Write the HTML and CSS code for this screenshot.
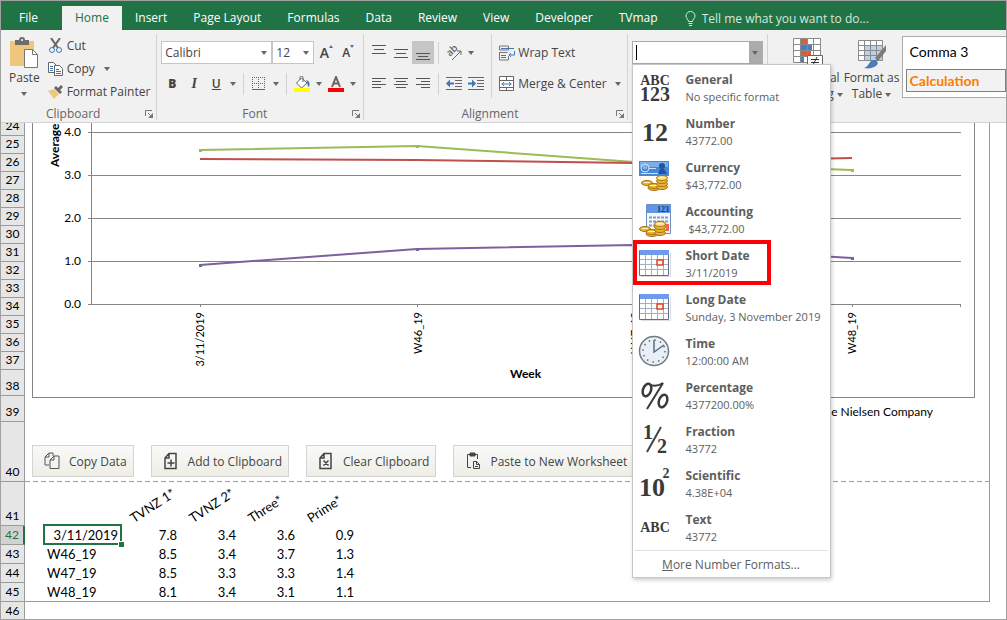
FILE: index.html
```html
<!DOCTYPE html>
<html lang="en">
<head>
    <meta charset="UTF-8">
    <meta name="viewport" content="width=device-width, initial-scale=1.0">
    <title>Workbook</title>
    <link rel="stylesheet" href="styles.css">
</head>
<body>

    <!-- shared icons -->
    <svg class="defs" width="0" height="0" aria-hidden="true">
        <symbol id="caret" viewBox="0 0 6 4"><path d="M0 0h6L3 4z" fill="#666"/></symbol>
        <symbol id="launch" viewBox="0 0 8 8"><path d="M.5 6V.5H7M3 3l3 3" fill="none" stroke="#777"/><path d="M8 3v5H3z" fill="#777"/></symbol>
        <symbol id="calendar" viewBox="0 0 32 32">
            <path d="M2 28.500h29.500V5" fill="none" stroke="#ddd"/>
            <path d="M1 3h29v24H1z" fill="#fff"/>
            <path d="M1 11.500h29M1 16.500h29M1 21.500h29M6.500 7v20M12.500 7v20M18.500 7v20M24.500 7v20" stroke="#9fb0cc" fill="none"/>
            <path d="M.5 2.500h29v25H.5z" fill="none" stroke="#5c6f92"/>
            <path d="M1 2h29v5H1z" fill="#6f9bea"/>
            <path d="M18 12h6v5h-6z" fill="#fff" stroke="#e2401c" stroke-width="1.500"/>
        </symbol>
        <symbol id="coins" viewBox="0 0 32 32">
            <g fill="#e8b530" stroke="#a87412">
                <ellipse cx="8" cy="23" rx="5.500" ry="2.500"/>
                <ellipse cx="15" cy="28" rx="6" ry="2.500"/>
                <ellipse cx="15" cy="26" rx="6" ry="2.500"/>
                <ellipse cx="23" cy="27" rx="5.500" ry="2.500"/>
                <ellipse cx="23" cy="24" rx="5.500" ry="2.500"/>
                <ellipse cx="23" cy="21" rx="5.500" ry="2.500"/>
                <ellipse cx="23" cy="18" rx="5.500" ry="2.500" fill="#fbe08a"/>
            </g>
            <path d="M5 22.500h6M11 25.500h7M20 17.500h6" stroke="#fff3b8"/>
        </symbol>
    </svg>

    <nav class="tabs">
        <a class="tab file" href="#">File</a>
        <a class="tab active" href="#">Home</a>
        <a class="tab" href="#">Insert</a>
        <a class="tab" href="#">Page Layout</a>
        <a class="tab" href="#">Formulas</a>
        <a class="tab" href="#">Data</a>
        <a class="tab" href="#">Review</a>
        <a class="tab" href="#">View</a>
        <a class="tab" href="#">Developer</a>
        <a class="tab" href="#">TVmap</a>
        <label class="tell">
            <svg width="11" height="15" viewBox="0 0 11 15" fill="none" stroke="#d5e8dc"><path d="M3.500 10.500C3.500 8.500 1 7.500 1 5a4.500 4.500 0 0 1 9 0c0 2.500-2.500 3.500-2.500 5.500zM3.500 12.500h4M4 14.500h3"/></svg>
            <input type="text" placeholder="Tell me what you want to do..." aria-label="Tell me what you want to do">
        </label>
    </nav>

    <header class="ribbon">

        <section class="group">
            <div class="clipboard">
                <button class="big paste">
                    <svg width="30" height="32" viewBox="0 0 30 32">
                        <path d="M1 4h24v25H1z" fill="#eec67c"/>
                        <path d="M6 8V3h4a3 3 0 0 1 6 0h4v5z" fill="#6d6d6d"/><circle cx="13" cy="3" r="1" fill="#fff"/>
                        <path d="M15.500 12.500h8l5 5v13h-13z" fill="#fff" stroke="#777"/>
                        <path d="M23.500 12.500v5h5" fill="none" stroke="#777"/>
                    </svg>
                    <span>Paste</span>
                    <svg class="caret"><use href="#caret"/></svg>
                </button>
                <div class="stack">
                    <button class="small">
                        <svg width="16" height="16" viewBox="0 0 16 16"><path d="M3 0l7 10M12 0L5 10" stroke="#666" stroke-width="2"/><circle cx="4" cy="12" r="2.500" fill="#f1f1f1" stroke="#3f77b5"/><circle cx="11" cy="12" r="2.500" fill="#f1f1f1" stroke="#3f77b5"/></svg>
                        Cut
                    </button>
                    <button class="small">
                        <svg width="16" height="16" viewBox="0 0 16 16"><g fill="#fff" stroke="#666"><path d="M.5 1.500h5l3 3v7h-8z"/><path d="M6.500 4.500h5l3 3v7h-8z"/></g><path d="M2 5.500h3M2 7.500h3M2 9.500h3M8 8.500h3M8 10.500h5M8 12.500h5" stroke="#3f77b5"/></svg>
                        Copy <svg class="caret gap"><use href="#caret"/></svg>
                    </button>
                    <button class="small">
                        <svg width="16" height="16" viewBox="0 0 16 16"><path d="M0 7l6-2 5 5-5 5z" fill="#eec67c"/><path d="M6 4l6 6 2-2-2-2 3-3-2-2-3 3-2-2z" fill="#666"/></svg>
                        Format Painter
                    </button>
                </div>
            </div>
            <div class="label"><span>Clipboard</span><svg class="launch"><use href="#launch"/></svg></div>
        </section>

        <section class="group">
            <div class="rows">
                <div class="row">
                    <span class="pick font"><select aria-label="Font"><option>Calibri</option></select><svg class="caret"><use href="#caret"/></svg></span>
                    <span class="pick size"><select aria-label="Font size"><option>12</option></select><svg class="caret"><use href="#caret"/></svg></span>
                    <button class="icon grow" aria-label="Increase font size"><b>A</b><svg width="4" height="3" viewBox="0 0 4 3"><path d="M0 3h4L2 0z" fill="#3f77b5"/></svg></button>
                    <button class="icon grow shrink" aria-label="Decrease font size"><b>A</b><svg width="4" height="3" viewBox="0 0 4 3"><path d="M0 0h4L2 3z" fill="#3f77b5"/></svg></button>
                </div>
                <div class="row">
                    <button class="icon letter"><b>B</b></button>
                    <button class="icon letter"><i>I</i></button>
                    <button class="icon letter"><u>U</u></button>
                    <button class="drop" aria-label="Underline options"><svg class="caret"><use href="#caret"/></svg></button>
                    <span class="line"></span>
                    <button class="icon" aria-label="Borders"><svg width="14" height="14" viewBox="0 0 14 14" stroke="#666"><path d="M0 .5h13M0 6.500h13M.5 0v12M6.500 0v12M12.500 0v12" stroke-dasharray="1 1"/><path d="M0 12.500h13"/></svg></button>
                    <button class="drop" aria-label="Border options"><svg class="caret"><use href="#caret"/></svg></button>
                    <span class="line"></span>
                    <button class="icon" aria-label="Fill colour"><svg width="16" height="16" viewBox="0 0 16 16"><path d="M2.500 7l5-5 5.500 5-5.500 5z" fill="#fff" stroke="#666"/><path d="M6 4V1.500a1.500 1.500 0 0 1 3 0V6" fill="none" stroke="#666"/><path d="M12 4c4 1 4 4 3 7-2-1-1-4-3-7z" fill="#3f77b5"/><path d="M0 12h16v4H0z" fill="#ff0"/></svg></button>
                    <button class="drop" aria-label="Fill options"><svg class="caret"><use href="#caret"/></svg></button>
                    <button class="icon" aria-label="Font colour"><svg width="16" height="16" viewBox="0 0 16 16"><path d="M4 11l4-10 4 10M5 7.500h6" fill="none" stroke="#666" stroke-width="2"/><path d="M0 12h16v4H0z" fill="#f00"/></svg></button>
                    <button class="drop" aria-label="Font colour options"><svg class="caret"><use href="#caret"/></svg></button>
                </div>
            </div>
            <div class="label"><span>Font</span><svg class="launch"><use href="#launch"/></svg></div>
        </section>

        <section class="group">
            <div class="rows">
                <div class="row">
                    <button class="icon" aria-label="Top align"><svg width="14" height="16" viewBox="0 0 14 16" stroke="#555"><path d="M0 .5h14M2 4.500h10M0 8.500h14"/></svg></button>
                    <button class="icon" aria-label="Middle align"><svg width="14" height="16" viewBox="0 0 14 16" stroke="#555"><path d="M0 4.500h14M2 8.500h10M0 12.500h14"/></svg></button>
                    <button class="icon on" aria-label="Bottom align"><svg width="14" height="16" viewBox="0 0 14 16" stroke="#555"><path d="M0 8.500h14M2 11.500h10M0 14.500h14"/></svg></button>
                    <span class="line"></span>
                    <button class="icon" aria-label="Orientation"><svg class="turn" width="16" height="16" viewBox="0 0 16 16"><text transform="translate(4 12) rotate(-45)" class="ab">ab</text><path d="M6 15L15 6M11 6h4v4" fill="none" stroke="#666"/></svg></button>
                    <button class="drop" aria-label="Orientation options"><svg class="caret"><use href="#caret"/></svg></button>
                </div>
                <div class="row">
                    <button class="icon" aria-label="Align left"><svg width="14" height="14" viewBox="0 0 14 14" stroke="#555"><path d="M0 1.500h14M0 4.500h9M0 7.500h14M0 10.500h9"/></svg></button>
                    <button class="icon" aria-label="Center"><svg width="14" height="14" viewBox="0 0 14 14" stroke="#555"><path d="M0 1.500h14M2 4.500h10M0 7.500h14M2 10.500h10"/></svg></button>
                    <button class="icon" aria-label="Align right"><svg width="14" height="14" viewBox="0 0 14 14" stroke="#555"><path d="M0 1.500h14M5 4.500h9M0 7.500h14M5 10.500h9"/></svg></button>
                    <span class="line"></span>
                    <button class="icon" aria-label="Decrease indent"><svg width="16" height="14" viewBox="0 0 16 14"><path d="M0 .5h16M9 3.500h7M9 6.500h7M9 9.500h7M0 12.500h16" stroke="#666"/><path d="M0 6.500l4-4v3h4v2H4v3z" fill="#3f77b5"/></svg></button>
                    <button class="icon" aria-label="Increase indent"><svg width="16" height="14" viewBox="0 0 16 14"><path d="M0 .5h16M9 3.500h7M9 6.500h7M9 9.500h7M0 12.500h16" stroke="#666"/><path d="M8 6.500l-4-4v3H0v2h4v3z" fill="#3f77b5"/></svg></button>
                </div>
            </div>
            <div class="rows wraps">
                <button class="small">
                    <svg width="16" height="16" viewBox="0 0 16 16" fill="none"><path d="M.5 1v4h9V1zM.5 7.500h8M.5 7v8h9v-4" stroke="#777"/><path d="M2 3.500h13M2 10.500h5M2 12.500h5" stroke="#3f77b5"/><path d="M15.500 6v4H10M12 8l-2 2 2 2" stroke="#3f77b5"/></svg>
                    Wrap Text
                </button>
                <button class="small">
                    <svg width="16" height="16" viewBox="0 0 16 16" fill="none"><path d="M.5.500h14v14H.5z" fill="#fff"/><path d="M.5.500h14v14H.5zM.5 4.500h14M.5 11.500h14M7.500 0v4M7.500 12v3" stroke="#666"/><path d="M2.500 8h10M5 6L3 8l2 2M10 6l2 2-2 2" stroke="#3f77b5"/></svg>
                    Merge &amp; Center <svg class="caret"><use href="#caret"/></svg>
                </button>
            </div>
            <div class="label"><span>Alignment</span><svg class="launch"><use href="#launch"/></svg></div>
        </section>

        <section class="group number">
            <div class="combo">
                <input type="text" aria-label="Number format" autofocus>
                <button aria-label="Open number formats"><svg class="caret"><use href="#caret"/></svg></button>

                <div class="menu">
                    <button class="format">
                        <svg class="glyph" viewBox="0 0 32 32"><text x="16" y="13" class="g14">ABC</text><text x="16" y="29" class="g20">123</text></svg>
                        <span><b>General</b><br>No specific format</span>
                    </button>
                    <button class="format">
                        <svg class="glyph" viewBox="0 0 32 32"><text x="16" y="25" class="g26">12</text></svg>
                        <span><b>Number</b><br>43772.00</span>
                    </button>
                    <button class="format">
                        <svg class="glyph" viewBox="0 0 32 32"><path d="M0 1h30v15H0z" fill="#4787d6"/><path d="M1 2h28v5H1z" fill="#78aeea"/><circle cx="6" cy="8" r="4" fill="none" stroke="#cfe4fb"/><path d="M4 8h4M10 8.500h7M2 13.500h22" stroke="#cfe4fb"/><circle cx="23" cy="6" r="3" fill="#1e55a4"/><path d="M19 14l2-5h4l3 5z" fill="#1e55a4"/><use href="#coins"/></svg>
                        <span><b>Currency</b><br>$43,772.00</span>
                    </button>
                    <button class="format">
                        <svg class="glyph" viewBox="0 0 32 32"><path d="M7.500.500h24v29h-24z" fill="#f3f7fd" stroke="#6f8fc4"/><path d="M8 1h23v8H8z" fill="#5f96e8"/><text x="24" y="8" class="lcd">123</text><path d="M10 13.500h20M10 17.500h20M10 21.500h20" stroke="#8b9bbb" stroke-width="2" stroke-dasharray="3 1"/><path d="M27 20h3v7h-3z" fill="#e66a4c"/><use href="#coins" x="-2" y="2"/></svg>
                        <span><b>Accounting</b><br>&nbsp;$43,772.00</span>
                    </button>
                    <button class="format marked">
                        <svg class="glyph"><use href="#calendar"/></svg>
                        <span><b>Short Date</b><br>3/11/2019</span>
                    </button>
                    <button class="format">
                        <svg class="glyph"><use href="#calendar"/></svg>
                        <span><b>Long Date</b><br>Sunday, 3 November 2019</span>
                    </button>
                    <button class="format">
                        <svg class="glyph" viewBox="0 0 32 32"><circle cx="15" cy="15" r="14.500" fill="#e9eff5" stroke="#6d7a88" stroke-width="1.500"/><circle cx="15" cy="15" r="11" fill="none" stroke="#5d6875" stroke-width="1.500" stroke-dasharray="1.500 4.260"/><path d="M15 4v12l10-7" fill="none" stroke="#5d7186" stroke-width="1.500"/></svg>
                        <span><b>Time</b><br>12:00:00 AM</span>
                    </button>
                    <button class="format">
                        <svg class="glyph" viewBox="0 0 32 32"><g fill="none" stroke="#3a3a3a"><ellipse cx="8" cy="10" rx="4" ry="6.500" stroke-width="2.500" transform="rotate(20 8 10)"/><ellipse cx="24" cy="21" rx="4" ry="6.500" stroke-width="2.500" transform="rotate(20 24 21)"/><path d="M10 4q6 4 14-1L8 29" stroke-width="2"/></g></svg>
                        <span><b>Percentage</b><br>4377200.00%</span>
                    </button>
                    <button class="format">
                        <svg class="glyph" viewBox="0 0 32 32"><text x="9" y="15" class="g20">1</text><text x="23" y="29" class="g20">2</text><path d="M22 3L8 28" stroke="#444" stroke-width="2"/></svg>
                        <span><b>Fraction</b><br>43772</span>
                    </button>
                    <button class="format">
                        <svg class="glyph" viewBox="0 0 32 32"><text x="13" y="28" class="g26">10</text><text x="27" y="10" class="g14">2</text></svg>
                        <span><b>Scientific</b><br>4.38E+04</span>
                    </button>
                    <button class="format">
                        <svg class="glyph" viewBox="0 0 32 32"><text x="16" y="20" class="g14">ABC</text></svg>
                        <span><b>Text</b><br>43772</span>
                    </button>
                    <button class="more"><u>M</u>ore Number Formats...</button>
                </div>
            </div>
        </section>

        <section class="styles">
            <button class="big">
                <svg width="32" height="32" viewBox="0 0 32 32"><path d="M1 1h27v24H1z" fill="#fff"/><path d="M8 0h7v6H8zM8 13h11v6H8z" fill="#d65f3c"/><path d="M8 6h12v7H8zM8 19h4v6H8z" fill="#4a7ebb"/><path d="M1.500.500h27v24h-27zM1 6.500h27M1 12.500h27M1 18.500h27M8.500 1v24M15.500 1v24M21.500 1v24" fill="none" stroke="#8a8a8a"/><path d="M15.500 17.500h15v12h-15z" fill="#fff" stroke="#666"/><path d="M19 21.500h8M19 24.500h8M25 19l-4 8" stroke="#333"/></svg>
                <span>Conditional<br>Formatting <svg class="caret"><use href="#caret"/></svg></span>
            </button>
            <button class="big">
                <svg width="32" height="32" viewBox="0 0 32 32"><path d="M2 2h24v20H2z" fill="#fff"/><path d="M8 8h18v14H8z" fill="#bcd0e8"/><path d="M2.500 2.500h24v20h-24zM2 7.500h24M2 12.500h24M2 17.500h24M8.500 2v20M14.500 2v20M20.500 2v20" fill="none" stroke="#8a8a8a"/><path d="M19 20L30 7v6l-8 10z" fill="#7c7c7c"/><path d="M8 30c5-1 5-8 10-8 3 0 5 3 3 5-3 3-8 4-13 3z" fill="#4a7ebb"/></svg>
                <span>Format as<br>Table <svg class="caret"><use href="#caret"/></svg></span>
            </button>
            <div class="gallery">
                <button class="comma">Comma 3</button>
                <button class="calculation">Calculation</button>
            </div>
        </section>
    </header>

    <main class="sheet">
        <ol class="headings">
            <li class="cut">24</li>
            <li>25</li>
            <li>26</li>
            <li>27</li>
            <li>28</li>
            <li>29</li>
            <li>30</li>
            <li>31</li>
            <li>32</li>
            <li>33</li>
            <li>34</li>
            <li>35</li>
            <li>36</li>
            <li>37</li>
            <li class="h26">38</li>
            <li class="h26">39</li>
            <li class="h60">40</li>
            <li class="h44">41</li>
            <li class="h19 current">42</li>
            <li class="h19">43</li>
            <li class="h19">44</li>
            <li class="h19">45</li>
            <li class="h19">46</li>
        </ol>

        <div class="page">
            <svg class="chart" viewBox="0 0 941 274" role="img" aria-label="Average by week">
                <path class="grid" d="M55 9.500h873M55 52.500h873M55 95.500h873M55 138.500h873M55 181.500h873M58.500 0v182M167.500 181v3M384.500 181v3M601.500 181v3M819.500 181v3M927.500 181v3"/>
                <polyline class="series green" points="167,27 384,23 601,39 819,47"/>
                <polyline class="series red" points="167,36 384,37 601,40 819,35"/>
                <polyline class="series purple" points="167,142 384,126 601,122 819,135"/>
                <path class="green" d="M166 26h3v3h-3zM383 22h3v3h-3zM818 46h3v3h-3z"/>
                <path class="purple" d="M166 141h3v3h-3zM383 125h3v3h-3zM818 134h3v3h-3z"/>
                <g class="values">
                    <text x="48" y="13">4.0</text>
                    <text x="48" y="56">3.0</text>
                    <text x="48" y="99">2.0</text>
                    <text x="48" y="142">1.0</text>
                    <text x="48" y="185">0.0</text>
                </g>
                <g class="weeks">
                    <text transform="translate(171 189) rotate(-90)">3/11/2019</text>
                    <text transform="translate(389 189) rotate(-90)">W46_19</text>
                    <text transform="translate(606 189) rotate(-90)">W47_19</text>
                    <text transform="translate(823 189) rotate(-90)">W48_19</text>
                </g>
                <text class="title" transform="translate(26 44) rotate(-90)">Average</text>
                <text class="title" x="477" y="255">Week</text>
            </svg>

            <p class="source">The Nielsen Company</p>

            <div class="actions">
                <button>
                    <svg width="16" height="18" viewBox="0 0 16 18" fill="none" stroke="#555"><path d="M5 13H1V5l4-4h4v3M1 5h4V1M6 16.500V8l4-4h5v12.500zM6 8h4V4"/></svg>
                    Copy Data
                </button>
                <button>
                    <svg width="16" height="18" viewBox="0 0 16 18" fill="none" stroke="#444" stroke-width="1.500"><path d="M6 1.500h7v15H2V6zM2 6h4V1.500M4.500 11h7M8 7.500v7"/></svg>
                    Add to Clipboard
                </button>
                <button>
                    <svg width="16" height="18" viewBox="0 0 16 18" fill="none" stroke="#444" stroke-width="1.500"><path d="M6 1.500h7v15H2V6zM2 6h4V1.500M5.500 8.500l5 5M10.500 8.500l-5 5"/></svg>
                    Clear Clipboard
                </button>
                <button>
                    <svg width="16" height="18" viewBox="0 0 16 18" fill="none" stroke="#444"><path d="M6 15.500H2.500v-13h10V7"/><path d="M5 1h5v3H5z" fill="#444"/><path d="M8.500 9.500h3l3 3v4h-6zM11.500 9.500v3h3M10 14.500h3"/></svg>
                    Paste to New Worksheet
                </button>
            </div>

            <table class="ratings">
                <thead>
                    <tr>
                        <td></td>
                        <th scope="col"><span>TVNZ 1*</span></th>
                        <th scope="col"><span>TVNZ 2*</span></th>
                        <th scope="col"><span>Three*</span></th>
                        <th scope="col"><span>Prime*</span></th>
                    </tr>
                </thead>
                <tbody>
                    <tr><th scope="row" class="selected">3/11/2019</th><td>7.8</td><td>3.4</td><td>3.6</td><td>0.9</td></tr>
                    <tr><th scope="row">W46_19</th><td>8.5</td><td>3.4</td><td>3.7</td><td>1.3</td></tr>
                    <tr><th scope="row">W47_19</th><td>8.5</td><td>3.3</td><td>3.3</td><td>1.4</td></tr>
                    <tr><th scope="row">W48_19</th><td>8.1</td><td>3.4</td><td>3.1</td><td>1.1</td></tr>
                </tbody>
            </table>
        </div>
    </main>

</body>
</html>
```
FILE: styles.css
```css
*, *::after{
    box-sizing: border-box;
}

body{
    display: flex;
    flex-direction: column;
    height: 100vh;
    margin: 0;
    border: 1px solid #a0a0a0;
    overflow: hidden;
    background-color: #fff;
    color: #444;
    font-family: "Open Sans", "Noto Sans", sans-serif;
    font-size: 12px;
}

button, input, select{
    margin: 0;
    padding: 0;
    border: 0;
    background: none;
    color: inherit;
    font: inherit;
}

.defs{
    position: absolute;
}

.caret{
    width: 6px;
    height: 4px;
    flex: none;
}

/* tabs */

.tabs{
    display: flex;
    align-items: flex-end;
    height: 29px;
    flex: none;
    background-color: #217346;
    color: #fff;
}

.tab{
    padding: 0 13px;
    line-height: 24px;
    color: #fff;
    text-decoration: none;
    white-space: nowrap;
}

.file{
    padding: 0 24px 0 18px;
}

.active{
    background-color: #f1f1f1;
    color: #217346;
}

.tell{
    display: flex;
    align-items: center;
    flex: 1;
    gap: 6px;
    height: 24px;
    padding-left: 14px;
}

.tell input{
    flex: 1;
    min-width: 0;
}

.tell input::placeholder{
    color: #d5e8dc;
    opacity: 1;
}

/* ribbon */

.ribbon{
    display: flex;
    height: 93px;
    flex: none;
    padding: 4px 0 2px;
    background-color: #f1f1f1;
    border-bottom: 1px solid #d2d2d2;
}

.group{
    display: grid;
    grid-template-columns: auto 1fr;
    grid-template-rows: 1fr 12px;
    flex: none;
    border-right: 1px solid #d2d2d2;
}

.label{
    grid-column: 1 / -1;
    grid-row: 2;
    display: flex;
    align-items: center;
    padding-right: 3px;
    line-height: 12px;
    color: #666;
}

.label span{
    flex: 1;
    text-align: center;
}

.launch{
    width: 8px;
    height: 8px;
}

.clipboard{
    display: flex;
    gap: 8px;
    padding: 0 6px 0 8px;
}

.big{
    display: flex;
    flex-direction: column;
    align-items: center;
    align-self: flex-start;
    padding-top: 3px;
    line-height: 16px;
}

.big .caret{
    vertical-align: middle;
}

.paste{
    gap: 1px;
}

.paste .caret{
    margin-top: 5px;
}

.small{
    display: flex;
    align-items: center;
    gap: 3px;
    height: 23px;
    white-space: nowrap;
}

.gap{
    margin-left: 6px;
}

.rows{
    display: flex;
    flex-direction: column;
    gap: 8px;
    padding: 7px 4px 0;
}

.row{
    display: flex;
    align-items: center;
    height: 23px;
}

.wraps{
    border-left: 1px solid #d2d2d2;
    height: 64px;
    padding: 7px 6px 0 7px;
}

.wraps .caret{
    margin-left: 5px;
}

.pick{
    display: flex;
    align-items: center;
    height: 23px;
    padding-right: 4px;
    border: 1px solid #c6c6c6;
    background-color: #fff;
}

.pick select{
    flex: 1;
    min-width: 0;
    padding-left: 3px;
    appearance: none;
}

.font{
    width: 111px;
}

.size{
    width: 42px;
    margin-right: 1px;
}

.icon{
    display: flex;
    align-items: center;
    justify-content: center;
    width: 22px;
    height: 23px;
}

.on{
    background-color: #c6c6c6;
}

.drop{
    display: flex;
    align-items: center;
    justify-content: center;
    width: 12px;
    height: 23px;
}

.line{
    width: 1px;
    height: 22px;
    margin: 0 4px;
    background-color: #d2d2d2;
}

.grow{
    align-items: flex-start;
    font-size: 14px;
    line-height: 23px;
}

.grow b{
    font-weight: 600;
}

.grow svg{
    margin-top: 4px;
}

.shrink{
    font-size: 12px;
}

.letter{
    font-weight: 600;
}

.letter i{
    font-family: "Liberation Serif", serif;
    font-size: 14px;
    font-weight: bold;
}

.turn{
    overflow: visible;
}

.ab{
    font-size: 10px;
    font-weight: 600;
    fill: #666;
}

/* number format list */

.number{
    display: block;
    width: 140px;
    padding: 7px 4px 0;
}

.combo{
    position: relative;
    display: flex;
    height: 23px;
    border: 1px solid #ababab;
    background-color: #fff;
}

.combo input{
    flex: 1;
    min-width: 0;
    margin: 3px 0 3px 3px;
    border-left: 1px solid #000;
    outline: none;
    color: #000;
    caret-color: transparent;
}

.combo > button{
    display: flex;
    align-items: center;
    justify-content: center;
    width: 13px;
    background-color: #ababab;
}

.menu{
    position: absolute;
    z-index: 2;
    top: 22px;
    left: -1px;
    width: 199px;
    padding-top: 1px;
    border: 1px solid #c6c6c6;
    background-color: #fff;
    box-shadow: 1px 2px 4px rgba(0, 0, 0, 0.2);
    color: #5e5e5e;
}

.format{
    position: relative;
    display: flex;
    align-items: center;
    gap: 15px;
    width: 100%;
    height: 44px;
    padding-left: 6px;
    font-size: 11px;
    line-height: 17px;
    text-align: left;
    white-space: nowrap;
}

.format b{
    font-size: 12px;
}

.marked::after{
    content: "";
    position: absolute;
    top: -2px;
    left: 0;
    width: 138px;
    height: 45px;
    border: 4px solid #fb0007;
}

.glyph{
    width: 32px;
    height: 32px;
    flex: none;
    overflow: visible;
}

.glyph text{
    fill: #3a3a3a;
    font-family: "Liberation Serif", serif;
    font-weight: bold;
    text-anchor: middle;
}

.glyph .g14{
    font-size: 14px;
}

.glyph .g20{
    font-size: 20px;
}

.glyph .g26{
    font-size: 26px;
}

.glyph .lcd{
    font-size: 8px;
    fill: #123a7c;
}

.more{
    display: block;
    width: calc(100% - 4px);
    height: 27px;
    margin: 0 2px;
    border-top: 1px solid #e1e1e1;
}

/* styles */

.styles{
    display: flex;
    flex: 1;
    min-width: 0;
    padding-left: 8px;
}

.styles .big{
    flex: none;
    width: 64px;
    padding: 4px 0 0;
    white-space: nowrap;
}

.gallery{
    display: flex;
    flex-direction: column;
    flex: 1;
    gap: 6px;
    min-width: 0;
    height: 62px;
    margin: 2px 0 0 -2px;
    padding: 3px 0 0 3px;
    border: 1px solid #ababab;
    border-right: 0;
    background-color: #fff;
    font-family: Lato, sans-serif;
    font-size: 14px;
}

.gallery button{
    height: 23px;
    padding-left: 4px;
    text-align: left;
}

.comma{
    color: #000;
}

.gallery .calculation{
    border: 1px solid #7f7f7f;
    padding-left: 3px;
    background-color: #f2f2f2;
    color: #fa7d00;
    font-weight: bold;
}

/* sheet */

.sheet{
    display: flex;
    align-items: flex-start;
    flex: 1;
    min-height: 0;
    overflow: hidden;
    color: #000;
    font-family: Lato, sans-serif;
}

.headings{
    flex: none;
    width: 24px;
    margin: 0;
    padding: 0;
    border-right: 1px solid #9b9b9b;
    background-color: #e6e6e6;
    font-size: 12px;
    line-height: 18px;
    list-style: none;
    text-align: center;
}

.headings li{
    display: flex;
    align-items: flex-end;
    justify-content: center;
    height: 18px;
    border-bottom: 1px solid #9b9b9b;
}

.headings .cut{
    height: 13px;
}

.headings .h19{
    height: 19px;
}

.headings .h26{
    height: 26px;
}

.headings .h44{
    height: 44px;
}

.headings .h60{
    height: 60px;
}

.headings .current{
    margin-right: -1px;
    border-right: 2px solid #217346;
    background-color: #d2d2d2;
    color: #217346;
}

.page{
    flex: 1;
    margin-right: 16px;
    border-right: 1px solid #9b9b9b;
    border-bottom: 1px solid #9b9b9b;
}

.chart{
    display: block;
    width: calc(100% - 21px);
    margin-left: 7px;
    border: 1px solid #868686;
    border-top: 0;
    font-size: 12px;
}

.grid{
    fill: none;
    stroke: #868686;
}

.green{
    fill: #9bbb59;
    stroke: #9bbb59;
}

.red{
    stroke: #c0504d;
}

.purple{
    fill: #7d60a0;
    stroke: #7d60a0;
}

path.green, path.purple{
    stroke: none;
}

.series{
    fill: none;
    stroke-width: 2;
}

.values, .weeks{
    text-anchor: end;
}

.weeks{
    font-size: 11px;
}

.title{
    font-weight: bold;
}

.source{
    margin: 5px 56px 0 0;
    font-size: 12px;
    line-height: 18px;
    text-align: right;
}

.actions{
    display: flex;
    gap: 17px;
    padding: 24px 7px 5px;
    background: repeating-linear-gradient(90deg, #9b9b9b 0 5px, #fff 5px 8px) bottom / 100% 1px no-repeat;
}

.actions button{
    display: flex;
    align-items: center;
    gap: 9px;
    height: 32px;
    padding: 0 6px 0 11px;
    border: 1px solid #d4d4d4;
    background: linear-gradient(#f9f9f9, #eeeee6);
    color: #444;
    font-family: "Open Sans", sans-serif;
    white-space: nowrap;
}

.ratings{
    width: 313px;
    margin-left: 19px;
    border-collapse: collapse;
    table-layout: fixed;
    font-size: 13px;
    line-height: 17px;
}

.ratings th, .ratings td{
    width: 59px;
    height: 19px;
    padding: 2px 3px 0;
    font-weight: normal;
    text-align: right;
    white-space: nowrap;
}

.ratings thead td{
    width: 77px;
    height: 43px;
}

.ratings thead th{
    padding-left: 14px;
    line-height: 13px;
    text-align: left;
    vertical-align: bottom;
}

.ratings thead span{
    display: block;
    transform: rotate(-33deg);
    transform-origin: left bottom;
}

.ratings tbody th{
    text-align: left;
}

.ratings tbody .selected{
    position: relative;
    outline: 2px solid #217346;
    outline-offset: -1px;
    text-align: right;
}

.selected::after{
    content: "";
    position: absolute;
    right: -3px;
    bottom: -3px;
    width: 6px;
    height: 6px;
    border: 1px solid #fff;
    border-width: 1px 0 0 1px;
    background-color: #217346;
}
```
